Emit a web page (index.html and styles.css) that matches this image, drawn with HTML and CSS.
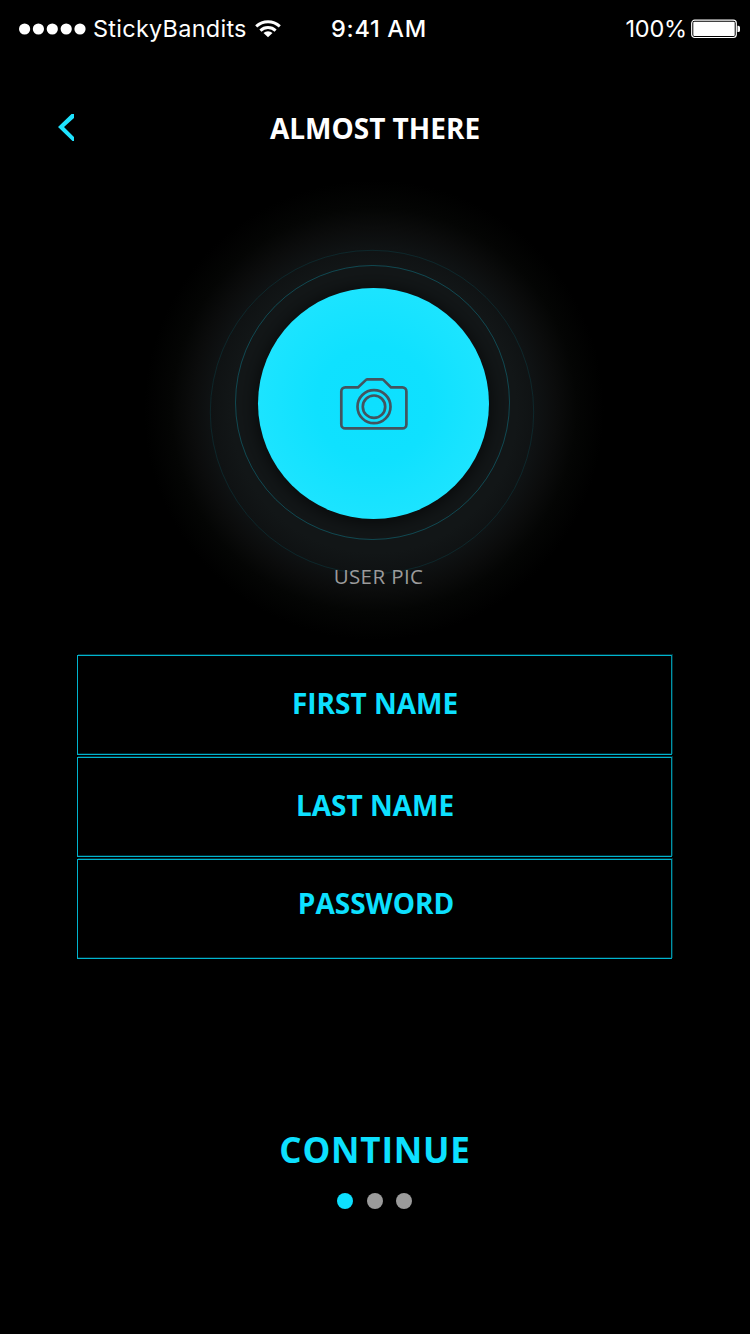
FILE: index.html
```html
<!DOCTYPE html>
<html lang="en">
<head>
<meta charset="utf-8">
<title>Almost There</title>
<link rel="stylesheet" href="styles.css">
</head>
<body>
<main class="screen">
  <header class="status">
    <div class="status-left">
      <svg class="signal" width="68" height="12" viewBox="0 0 68 12" fill="#fff"><circle cx="5.6" cy="6" r="5.6"/><circle cx="19.4" cy="6" r="5.6"/><circle cx="33.3" cy="6" r="5.6"/><circle cx="47.2" cy="6" r="5.6"/><circle cx="61" cy="6" r="5.6"/></svg>
      <span class="carrier">StickyBandits</span>
      <svg class="wifi" width="26" height="18" viewBox="0 0 26 18" fill="none" stroke="#fff" stroke-width="3"><path d="M1.200 6.400C8 .2 18 .2 24.800 6.400"/><path d="M5.400 10.600C9.700 6.600 16.300 6.600 20.600 10.600"/><path d="M8.500 13a6.500 6.500 0 0 1 9 0l-4.500 4.300z" fill="#fff" stroke="none"/></svg>
    </div>
    <span class="time">9:41 AM</span>
    <div class="status-right">
      <span class="percent">100%</span>
      <svg class="battery" width="50" height="20" viewBox="0 0 50 20"><rect x=".7" y="1.200" width="44.600" height="17.300" rx="3" fill="none" stroke="#fff" stroke-width="1.200"/><rect x="2.300" y="2.800" width="41.400" height="14.100" rx="1" fill="#fff"/><path d="M46.500 6.700h.8a1.700 1.700 0 0 1 1.700 1.700v3a1.700 1.700 0 0 1-1.700 1.700H46.500z" fill="#fff"/></svg>
    </div>
  </header>

  <nav class="nav">
    <svg class="back" width="18" height="30" viewBox="0 0 18 30" fill="#1fe3ff"><path d="M2 15L15.500 2H18V6L8 15L18 25V29H16.500Z"/></svg>
    <h1 class="title">ALMOST THERE</h1>
  </nav>

  <section class="avatar">
    <svg class="avatar-art" width="470" height="480" viewBox="140 170 470 480">
      <defs>
        <radialGradient id="glow" gradientUnits="userSpaceOnUse" cx="374" cy="410" r="230">
          <stop offset="0" stop-color="#121618"/><stop offset=".62" stop-color="#121617"/><stop offset=".71" stop-color="#0f1213"/><stop offset=".79" stop-color="#0b0c0c"/><stop offset=".88" stop-color="#040504"/><stop offset="1" stop-color="#000"/>
        </radialGradient>
        <radialGradient id="disc"><stop offset="0" stop-color="#0de0ff"/><stop offset=".5" stop-color="#0fe1ff"/><stop offset="1" stop-color="#1ce4ff"/></radialGradient>
        <filter id="soft" x="-30%" y="-30%" width="160%" height="160%"><feGaussianBlur stdDeviation="9"/></filter>
      </defs>
      <circle cx="374" cy="410" r="230" fill="url(#glow)"/>
      <circle cx="372" cy="412" r="161.700" fill="none" stroke="#00d0ee" stroke-opacity=".11"/>
      <circle cx="373.500" cy="405.500" r="116" fill="#000" fill-opacity=".7" filter="url(#soft)"/>
      <circle cx="372.500" cy="402.500" r="137" fill="none" stroke="#0de0ff" stroke-opacity=".25"/>
      <circle cx="373.500" cy="403.500" r="115.500" fill="url(#disc)"/>
      <g fill="none" stroke="#43545f" stroke-width="2.700">
        <path d="M345.300 387.400H358L366 379.900Q366.600 379.300 367.500 379.300H381.900Q382.800 379.300 383.400 379.900L391 387.400H402.400a4 4 0 0 1 4 4V424.400a4 4 0 0 1-4 4H345.300a4 4 0 0 1-4-4V391.400a4 4 0 0 1 4-4z"/>
        <circle cx="374" cy="406.700" r="16.500"/><circle cx="374" cy="406.700" r="11.200"/>
      </g>
    </svg>
    <span class="caption">USER PIC</span>
  </section>

  <form class="fields">
    <div class="field"><span class="label">FIRST NAME</span></div>
    <div class="field"><span class="label">LAST NAME</span></div>
    <div class="field raised"><span class="label">PASSWORD</span></div>
  </form>

  <footer class="footer">
    <span class="continue">CONTINUE</span>
    <svg class="dots" width="76" height="16" viewBox="0 0 76 16"><circle cx="8" cy="8" r="8" fill="#0de0ff"/><circle cx="38" cy="8" r="8" fill="#9b9b9b"/><circle cx="67" cy="8" r="8" fill="#9b9b9b"/></svg>
  </footer>
</main>
</body>
</html>
```
FILE: styles.css
```css
* { box-sizing: border-box; }
body { margin: 0; background: #000; }
.screen {
  width: 750px;
  height: 1334px;
  overflow: hidden;
  background: #000;
  font-family: "Open Sans", "Noto Sans", sans-serif;
  display: flex;
  flex-direction: column;
}
.status {
  height: 58px;
  padding: 0 9px 0 19px;
  display: grid;
  grid-template-columns: 1fr auto 1fr;
  align-items: center;
  color: #fff;
  font: 400 23.5px/28px Inter, sans-serif;
  white-space: nowrap;
}
.status-left { display: flex; align-items: center; }
.carrier { margin-left: 6px; letter-spacing: .25px; }
.wifi { margin-left: 8px; }
.time { font-weight: 500; letter-spacing: .7px; margin-right: 2px; }
.status-right { display: flex; align-items: center; justify-content: flex-end; }
.percent { letter-spacing: -.2px; }
.battery { margin-left: 4px; }
.nav {
  height: 112px;
  padding: 54px 0 0 56px;
  display: flex;
  align-items: flex-start;
}
.back { flex: none; }
.title {
  flex: 1;
  margin: -1px 0 0;
  padding-right: 74px;
  color: #fff;
  text-align: center;
  font-size: 28px;
  line-height: 34px;
  font-weight: 700;
}
.avatar {
  height: 485px;
  display: flex;
  flex-direction: column;
  align-items: center;
}
.avatar-art { flex: none; }
.caption {
  margin: -89px 0 0 7px;
  color: #9b9b9b;
  font-size: 20.5px;
  line-height: 30px;
  letter-spacing: .4px;
}
.fields {
  margin-left: 77px;
  display: flex;
  flex-direction: column;
  gap: 2px;
}
.field {
  width: 595px;
  height: 100px;
  padding: 0 0 4px 1px;
  display: flex;
  align-items: center;
  justify-content: center;
  border: 1px solid #00b4ce;
  border-right-color: #0093a8;
  box-shadow: 1px -1px 0 #00333b, inset 0 -1px 0 #002a31;
}
.raised { padding: 0 0 12px 3px; }
.label {
  color: #0de0ff;
  font-size: 28px;
  line-height: 38px;
  font-weight: 700;
}
.footer {
  margin-top: 167px;
  display: flex;
  flex-direction: column;
  align-items: center;
}
.continue {
  color: #0de0ff;
  font-size: 35px;
  line-height: 48px;
  font-weight: 700;
  letter-spacing: .8px;
}
.dots { margin-top: 19px; }
```
